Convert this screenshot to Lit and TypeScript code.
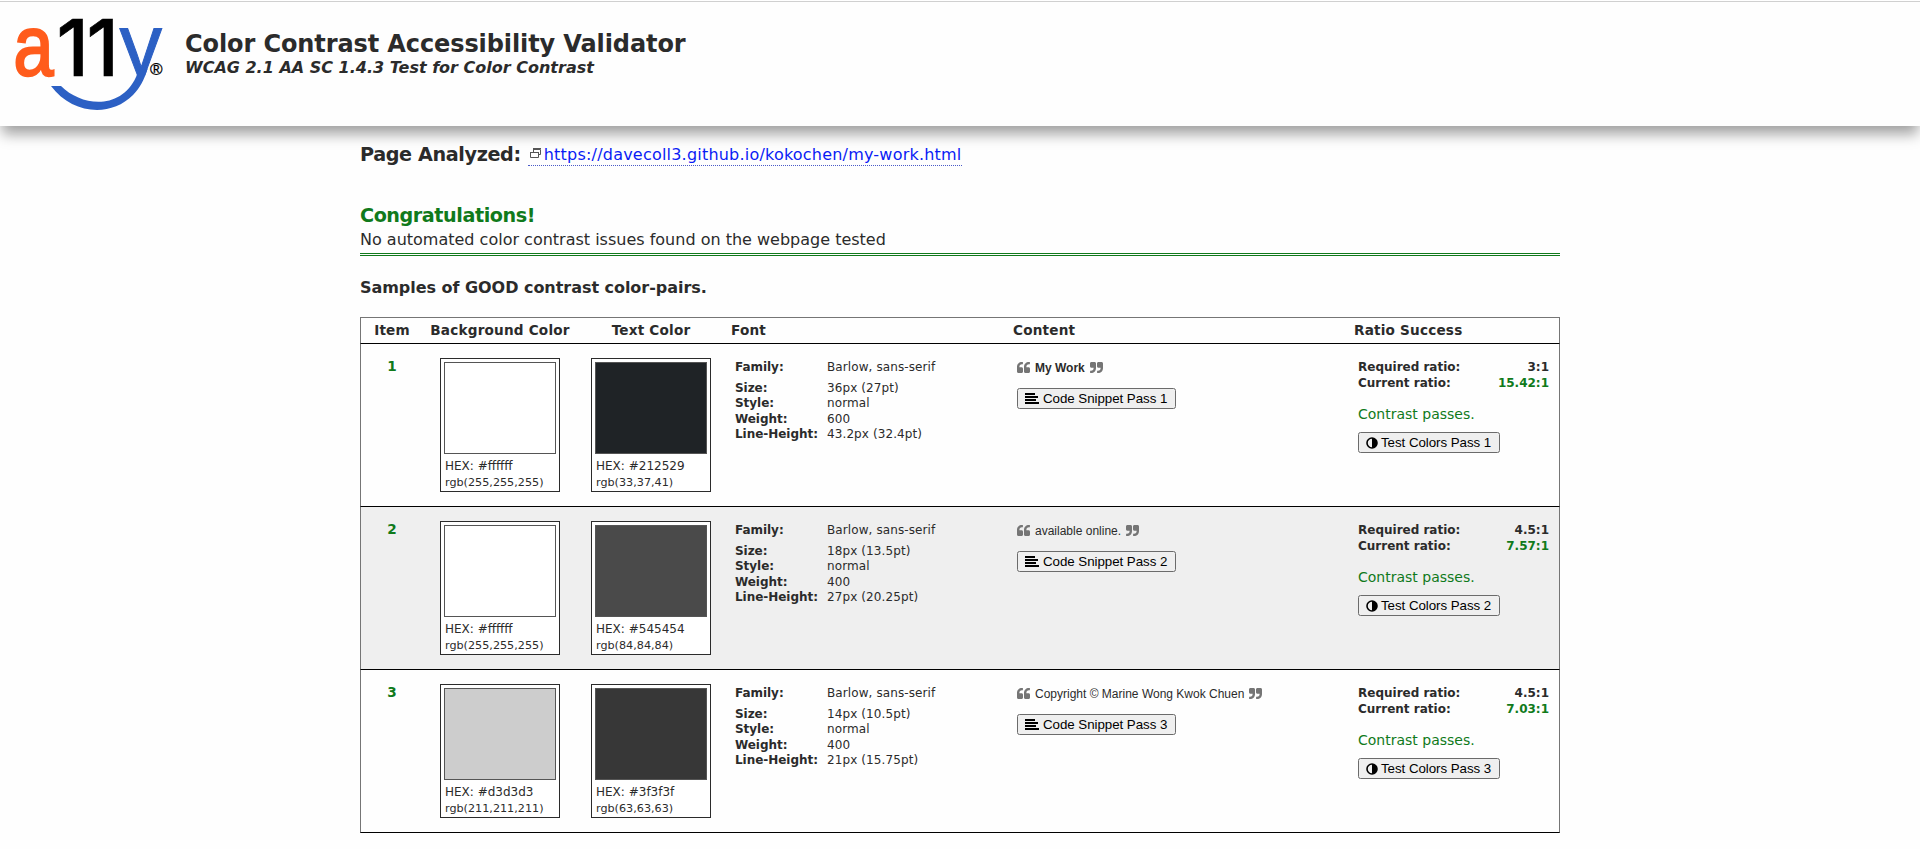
import { LitElement, html, css, svg } from "lit";
import { customElement } from "lit/decorators.js";

const samples = [
  { n: 1, bg: "#ffffff", bgHex: "#ffffff", bgRgb: "rgb(255,255,255)", fg: "#1f2326", fgHex: "#212529", fgRgb: "rgb(33,37,41)", size: "36px (27pt)", weight: "600", lh: "43.2px (32.4pt)", text: "My Work", bold: true, req: "3:1", cur: "15.42:1" },
  { n: 2, bg: "#ffffff", bgHex: "#ffffff", bgRgb: "rgb(255,255,255)", fg: "#4a4a4a", fgHex: "#545454", fgRgb: "rgb(84,84,84)", size: "18px (13.5pt)", weight: "400", lh: "27px (20.25pt)", text: "available online.", bold: false, req: "4.5:1", cur: "7.57:1" },
  { n: 3, bg: "#cdcdcd", bgHex: "#d3d3d3", bgRgb: "rgb(211,211,211)", fg: "#373737", fgHex: "#3f3f3f", fgRgb: "rgb(63,63,63)", size: "14px (10.5pt)", weight: "400", lh: "21px (15.75pt)", text: "Copyright © Marine Wong Kwok Chuen", bold: false, req: "4.5:1", cur: "7.03:1" },
];

const quote = (right: boolean) => html`<svg class="quote" width="13" height="11" viewBox="0 0 13 11">
  <g transform=${right ? "rotate(180 6.5 5.5)" : ""} fill="#757575">
    ${[0, 7].map((x) => svg`<path transform="translate(${x} 0)" d="M5.900 0H5C2 0 0 2 0 5v4.500C0 10.400.600 11 1.500 11H4.500C5.400 11 6 10.400 6 9.500V6.800C6 5.900 5.400 5.300 4.500 5.300H2.400V4.800C2.400 3.200 3.300 2.300 5 2.300H5.900Z"/>`)}
  </g></svg>`;

@customElement("app-root")
export class AppRoot extends LitElement {
  static styles = css`
    :host { display: block; height: 849px; overflow: hidden; background: #fefefe; color: #2b2b2b; font-family: "DejaVu Sans", Verdana, sans-serif; white-space: nowrap; }
    * { box-sizing: border-box; }
    header { display: flex; height: 126px; border-top: 1px solid #fff; box-shadow: 0 10px 13px -2px #a0a0a0; background: #fefefe; }
    header .in { display: flex; flex: 1; border-top: 1px solid #d0d0d0; }
    .logo { display: block; width: 185px; height: 120px; flex: none; }
    .titles { padding-top: 28px; }
    h1 { margin: 0; font-size: 24px; line-height: 28px; letter-spacing: -.1px; }
    .sub { font-size: 16px; line-height: 19px; font-weight: bold; font-style: italic; }
    main { width: 1200px; margin: 0 auto; padding-top: 15px; }
    .page { display: flex; height: 62px; gap: 7px; }
    .page b { font-size: 19.2px; line-height: 28px; letter-spacing: -.38px; }
    .page a { display: flex; height: 20px; margin-top: 5px; color: #0a1cf5; font-size: 16px; line-height: 18px; border-bottom: 1px dotted #4a5bc8; letter-spacing: .21px; }
    .ext { margin: 2px 2px 0 2px; }
    .good { border-bottom: 3px double #107a1b; height: 53px; }
    .good b { display: block; color: #107a1b; font-size: 19.2px; line-height: 26px; letter-spacing: -.45px; }
    .good span { display: block; font-size: 16px; line-height: 22px; }
    .samples { font-weight: bold; font-size: 16px; line-height: 23px; padding-top: 20px; height: 61px; letter-spacing: -.04px; }
    .table { border-top: 1px solid #757575; }
    .row { display: grid; grid-template-columns: 62px 154px 148px 282px 341px 1fr; height: 163px; border: 1px solid #757575; border-width: 0 1px 1px; border-bottom-color: #000; }
    .row.head { height: 26px; font-weight: bold; font-size: 13.6px; line-height: 25px; letter-spacing: .2px; }
    .row.alt { background: #efefef; }
    .head .l { padding-left: 6px; }
    .c { text-align: center; }
    .num { color: #107a1b; font-weight: bold; font-size: 13.6px; line-height: 18px; padding-top: 13px; }
    .sw { width: 120px; height: 134px; margin: 14px auto 0; border: 1px solid #2b2b2b; background: #fff; padding: 3px; }
    .chip { height: 92px; border: 1px solid #555; margin-bottom: 4px; }
    .hex { font-size: 12px; line-height: 16px; padding-left: 1px; }
    .rgb { font-size: 11.2px; line-height: 17px; padding-left: 1px; }
    .font { display: grid; grid-template-columns: 92px auto; align-content: start; padding: 16px 0 0 10px; font-size: 12px; line-height: 15.400px; }
    .font .f { height: 21px; }
    .font b { letter-spacing: -.04px; }
    .font span { letter-spacing: .1px; }
    .content { padding: 16px 0 0 10px; }
    .q { display: flex; align-items: center; gap: 5px; height: 15px; font: 12px/15px "Liberation Sans", Arial, sans-serif; }
    .q span { padding-top: 1px; }
    .q.bold { font-weight: bold; }
    .quote { display: block; flex: none; }
    button { display: flex; align-items: center; height: 21px; border: 1px solid #6b6b6b; border-radius: 2.500px; background: #efefef; color: #000; font: 13.333px/19px "Liberation Sans", Arial, sans-serif; letter-spacing: -.05px; padding: 0 8px 0 7px; }
    .content button { margin-top: 12.500px; }
    .ratio { padding: 16px 10px 0; font-size: 12px; line-height: 15.700px; }
    .ratio div { display: flex; justify-content: space-between; font-weight: bold; }
    .ratio .cur, .ratio .ok { color: #107a1b; }
    .ratio p { margin: 13px 0 8px; font-size: 14px; line-height: 20px; }
    .ic { flex: none; margin-right: 4px; }
    .ratio .ic { margin-right: 3px; }
  `;

  render() {
    return html`
      <header><div class="in">
        <svg class="logo" viewBox="0 2 185 120">
          <text x="13.500" y="74.500" font-family="Liberation Sans" font-size="86" fill="#ff5c1c" stroke="#ff5c1c" stroke-width="2.500" textLength="40" lengthAdjust="spacingAndGlyphs">a</text>
          <text x="56.500 86.500" y="76" font-family="Inter" font-weight="500" font-size="78" fill="#000" stroke="#000" stroke-width=".6">11</text>
          <clipPath id="arms"><rect x="115" y="20" width="60" height="56"/></clipPath>
          <text x="119.500" y="75" font-family="Liberation Sans" font-size="89" fill="#2c60c4" stroke="#2c60c4" textLength="42.500" lengthAdjust="spacingAndGlyphs" clip-path="url(#arms)">y</text>
          <path d="M51 86H61C82 107 121 110 136 77L139 70L147.500 69C144 80 140 88 133 95C110 118 72 114 51 86Z" fill="#2c60c4"/>
          <text x="150" y="75" font-family="Liberation Sans" font-size="17" fill="#000" stroke="#000" stroke-width=".3">®</text>
        </svg>
        <div class="titles"><h1>Color Contrast Accessibility Validator</h1><div class="sub">WCAG 2.1 AA SC 1.4.3 Test for Color Contrast</div></div>
      </div></header>
      <main>
        <div class="page"><b>Page Analyzed:</b><a><svg class="ext" width="12" height="11" viewBox="0 0 12 11" fill="none" stroke="#555"><path d="M.5 4V9.500H8.500V4M0 4.500H9M3 .5H11M3 1.500H10.500V6.500H9M3.500 1V4"/></svg><span class="url">https://davecoll3.github.io/kokochen/my-work.html</span></a></div>
        <div class="good"><b>Congratulations!</b><span>No automated color contrast issues found on the webpage tested</span></div>
        <div class="samples">Samples of GOOD contrast color-pairs.</div>
        <div class="table">
          <div class="row head"><div class="c">Item</div><div class="c">Background Color</div><div class="c">Text Color</div><div class="l">Font</div><div class="l">Content</div><div class="l">Ratio Success</div></div>
          ${samples.map((s) => html`<div class="row ${s.n === 2 ? "alt" : ""}">
            <div class="c num">${s.n}</div>
            <div><div class="sw"><div class="chip" style="background:${s.bg}"></div><div class="hex">HEX: ${s.bgHex}</div><div class="rgb">${s.bgRgb}</div></div></div>
            <div><div class="sw"><div class="chip" style="background:${s.fg}"></div><div class="hex">HEX: ${s.fgHex}</div><div class="rgb">${s.fgRgb}</div></div></div>
            <div class="font"><b class="f">Family:</b><span>Barlow, sans-serif</span><b>Size:</b><span>${s.size}</span><b>Style:</b><span>normal</span><b>Weight:</b><span>${s.weight}</span><b>Line-Height:</b><span>${s.lh}</span></div>
            <div class="content"><div class="q ${s.bold ? "bold" : ""}">${quote(false)}<span>${s.text}</span>${quote(true)}</div>
              <button><svg class="ic" width="14" height="11" viewBox="0 0 14 11" fill="#000"><path d="M0 0H10V2H0ZM0 3H13V5H0ZM0 6H11V8H0ZM0 9H14V11H0Z"/></svg><span>Code Snippet Pass ${s.n}</span></button></div>
            <div class="ratio"><div><span>Required ratio:</span><span>${s.req}</span></div><div><span>Current ratio:</span><span class="cur">${s.cur}</span></div><p class="ok">Contrast passes.</p>
              <button><svg class="ic" width="12" height="12" viewBox="0 0 12 12"><circle cx="6" cy="6" r="5" fill="none" stroke="#000" stroke-width="1.600"/><path d="M6 1A5 5 0 0 1 6 11Z"/></svg><span>Test Colors Pass ${s.n}</span></button></div>
          </div>`)}
        </div>
      </main>`;
  }
}
